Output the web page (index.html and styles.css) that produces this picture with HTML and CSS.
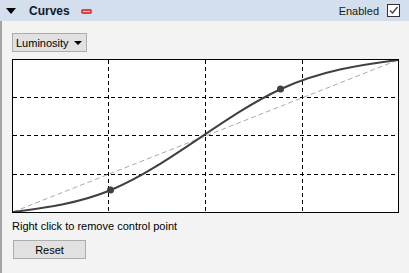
FILE: index.html
```html
<!DOCTYPE html>
<html>
<head>
<meta charset="utf-8">
<link rel="stylesheet" href="styles.css">
</head>
<body>
<div class="panel">
  <div class="header">
    <span class="twisty"></span>
    <span class="title">Curves</span>
    <span class="minus"></span>
    <span class="spacer"></span>
    <span class="enabled">Enabled</span>
    <span class="checkbox">
      <svg width="11" height="11" viewBox="0 0 11 11"><path d="M2 5.5 L4.5 8 L9.5 2" fill="none" stroke="#404040" stroke-width="1.3"/></svg>
    </span>
  </div>
  <div class="content">
    <div class="dropdown"><span>Luminosity</span><span class="arrow"></span></div>
    <div class="chart">
      <svg width="385" height="152" viewBox="0 0 385 152">
        <g stroke="#000" stroke-width="1" stroke-dasharray="4 3" fill="none">
          <line x1="95.5" y1="0" x2="95.5" y2="152"/>
          <line x1="192.5" y1="0" x2="192.5" y2="152"/>
          <line x1="289.5" y1="0" x2="289.5" y2="152"/>
          <line x1="0" y1="37.5" x2="385" y2="37.5"/>
          <line x1="0" y1="75.5" x2="385" y2="75.5"/>
          <line x1="0" y1="114.5" x2="385" y2="114.5"/>
        </g>
        <line x1="0" y1="152" x2="385" y2="0" stroke="#aaaaaa" stroke-width="1" stroke-dasharray="5 3"/>
        <path d="M0,152 C32.67,147.76 65.33,143.53 98,130 C154.67,106.53 211.33,55.12 268,29 C307.33,10.87 346.67,4.94 385,0" fill="none" stroke="#404040" stroke-width="2"/>
        <circle cx="97.5" cy="130" r="3.5" fill="#404040"/>
        <circle cx="267.5" cy="29" r="3.5" fill="#404040"/>
      </svg>
    </div>
    <div class="hint">Right click to remove control point</div>
    <div class="button">Reset</div>
  </div>
</div>
</body>
</html>
```
FILE: styles.css
```css
html, body {
  margin: 0;
  padding: 0;
  background: #f3f3f3;
}
.panel {
  width: 409px;
  height: 273px;
  box-sizing: border-box;
  background: #f3f3f3;
  font-family: "Liberation Sans", Arial, sans-serif;
  font-size: 11px;
  color: #000;
  display: flex;
  flex-direction: column;
  overflow: hidden;
}
.header {
  height: 21px;
  flex: none;
  background: #d3dfec;
  display: flex;
  align-items: center;
  padding-left: 6px;
  padding-right: 9px;
}
.twisty {
  width: 0;
  height: 0;
  border-left: 5px solid transparent;
  border-right: 5px solid transparent;
  border-top: 6px solid #000;
  margin-right: 13px;
  margin-top: 1px;
}
.title {
  font-weight: bold;
  font-size: 12px;
  color: #0f1830;
}
.minus {
  width: 11px;
  height: 5px;
  box-sizing: border-box;
  border-radius: 2px;
  background: #f6c4c4;
  border: 2px solid #dc4040;
  margin-left: 11px;
  margin-top: 1px;
}
.spacer { flex: 1; }
.enabled {
  font-size: 11px;
  color: #1a1a1a;
  margin-right: 8px;
}
.checkbox {
  width: 13px;
  height: 13px;
  box-sizing: border-box;
  border: 1px solid #333;
  background: #fff;
  display: flex;
  align-items: center;
  justify-content: center;
}
.content {
  flex: 1;
  border-left: 2px solid #a4a4a4;
  padding: 12px 0 0 10px;
}
.dropdown {
  width: 75px;
  height: 19px;
  box-sizing: border-box;
  background: #e1e1e1;
  border: 1px solid #adadad;
  display: flex;
  align-items: center;
  padding-left: 3px;
  font-size: 11px;
  color: #000;
}
.dropdown .arrow {
  width: 0;
  height: 0;
  border-left: 4px solid transparent;
  border-right: 4px solid transparent;
  border-top: 4px solid #000;
  margin-left: auto;
  margin-right: 4px;
}
.chart {
  margin-top: 7px;
  width: 385px;
  height: 152px;
  border: 1px solid #000;
  background: #fff;
}
.chart svg { display: block; }
.hint {
  margin-top: 6px;
  line-height: 14px;
  font-size: 11px;
}
.button {
  margin-top: 7px;
  margin-left: 1px;
  width: 73px;
  height: 19px;
  box-sizing: border-box;
  background: #e1e1e1;
  border: 1px solid #adadad;
  display: flex;
  align-items: center;
  justify-content: center;
  font-size: 11px;
}
```
